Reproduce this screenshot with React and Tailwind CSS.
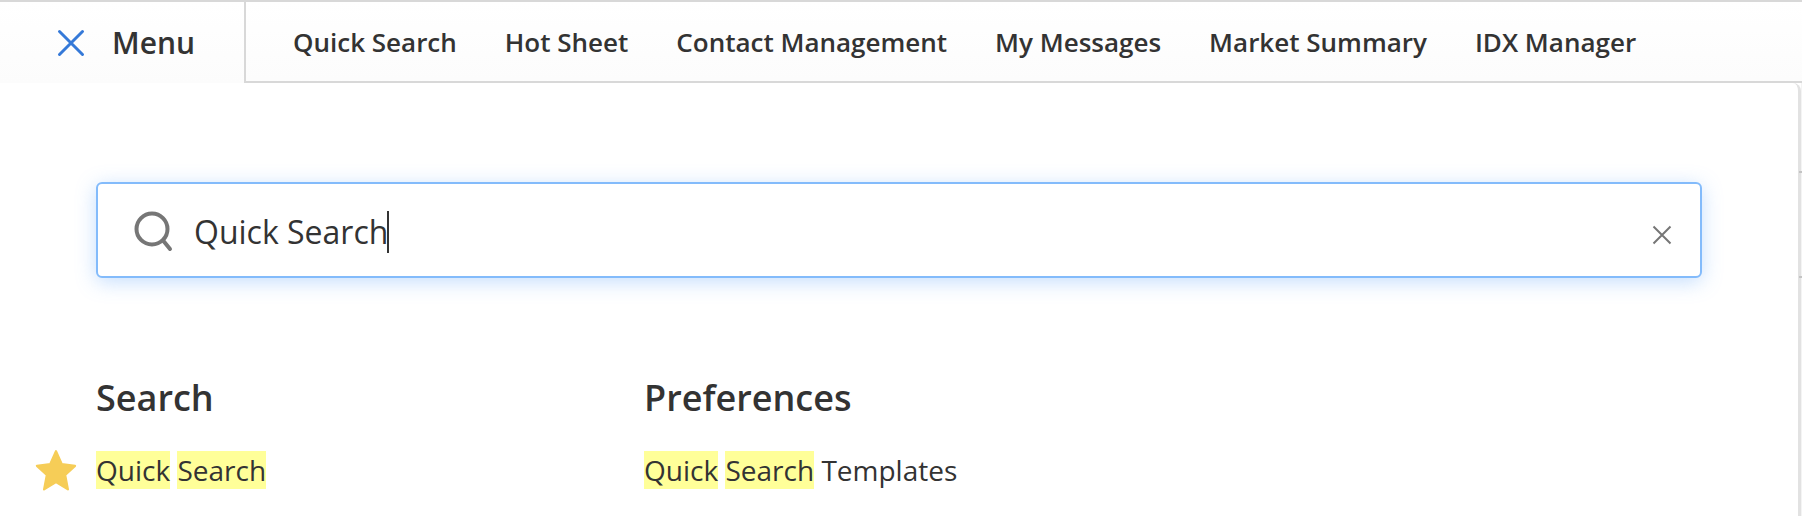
import React from "react";

function Hl({ children }) {
  return <span className="bg-[#ffff99]">{children}</span>;
}

export default function App() {
  const nav = ["Quick Search", "Hot Sheet", "Contact Management", "My Messages", "Market Summary", "IDX Manager"];
  return (
    <div className="relative w-[1802px] h-[516px] overflow-hidden bg-white flex flex-col text-[#333333] font-['Open_Sans',sans-serif]">
      <div className="h-[2px] bg-[#d8d8d8] shrink-0" />
      <header className="flex h-[81px] shrink-0">
        <div className="w-[244px] shrink-0 flex items-center bg-gradient-to-b from-white to-[#fcfcfc] pl-[56px]">
          <svg width="32" height="32" viewBox="0 0 32 32" fill="none" className="ml-[-1px]">
            <path d="M4.5 4.5 L27.5 27.5 M27.5 4.5 L4.5 27.5" stroke="#3579d8" strokeWidth="3" strokeLinecap="round" />
          </svg>
          <span className="ml-[25px] text-[30px] font-semibold leading-none">Menu</span>
        </div>
        <nav className="flex-1 flex items-center gap-[48px] pl-[47px] border-l-2 border-b-2 border-[#d8d8d8] bg-gradient-to-b from-white to-[#fcfcfc]">
          {nav.map((n) => (
            <span key={n} className="text-[26px] font-semibold leading-none whitespace-nowrap">{n}</span>
          ))}
        </nav>
      </header>
      <div className="flex flex-1 min-h-0">
        <main className="w-[1801px] border-r-[3px] border-[#e2e2e2] rounded-tr-[8px] bg-white pl-[96px] pt-[99px]">
          <div className="w-[1606px] h-[96px] rounded-[6px] border-2 border-[#83bbfb] bg-white shadow-[0_4px_20px_rgba(90,160,250,0.35)] flex items-center pl-[36px] pr-[28px]">
            <svg width="40" height="42" viewBox="0 0 40 42" fill="none" className="mt-[3px]">
              <circle cx="18" cy="18" r="15.5" stroke="#767676" strokeWidth="4" />
              <path d="M29.5 30 L36 38" stroke="#767676" strokeWidth="4" strokeLinecap="round" />
            </svg>
            <span className="ml-[20px] text-[32px] leading-none mt-[3px]">Quick Search</span>
            <span className="w-[2px] h-[42px] bg-[#333333] mt-[3px] ml-[-1px]" />
            <svg width="20" height="20" viewBox="0 0 20 20" fill="none" className="ml-auto mt-[9px]">
              <path d="M1.5 1.5 L18.5 18.5 M18.5 1.5 L1.5 18.5" stroke="#767676" strokeWidth="2" />
            </svg>
          </div>
          <div className="flex mt-[98px]">
            <section className="w-[548px]">
              <h2 className="text-[36px] font-semibold leading-[44px]">Search</h2>
              <div className="relative mt-[31px] text-[28px] leading-[38px]">
                <svg width="44" height="44" viewBox="0 0 24 24" className="absolute left-[-62px] top-[-2px]">
                  <path d="M12 1.2 L15.1 8.2 L22.4 9.2 L17 14.2 L18.5 22 L12 18 L5.5 22 L7 14.2 L1.6 9.2 L8.9 8.2 Z" fill="#f6cd57" stroke="#f6cd57" strokeWidth="1.2" strokeLinejoin="round" />
                </svg>
                <Hl>Quick</Hl> <Hl>Search</Hl>
              </div>
            </section>
            <section>
              <h2 className="text-[36px] font-semibold leading-[44px]">Preferences</h2>
              <div className="mt-[31px] text-[28px] leading-[38px]">
                <Hl>Quick</Hl> <Hl>Search</Hl> Templates
              </div>
            </section>
          </div>
        </main>
        <aside className="flex-1 bg-[#f4f4f4]" />
      </div>
      <div className="absolute right-0 top-[171px] w-[3px] h-[2px] bg-[#c4c4c4]" />
      <div className="absolute right-0 top-[276px] w-[3px] h-[2px] bg-[#c4c4c4]" />
    </div>
  );
}
